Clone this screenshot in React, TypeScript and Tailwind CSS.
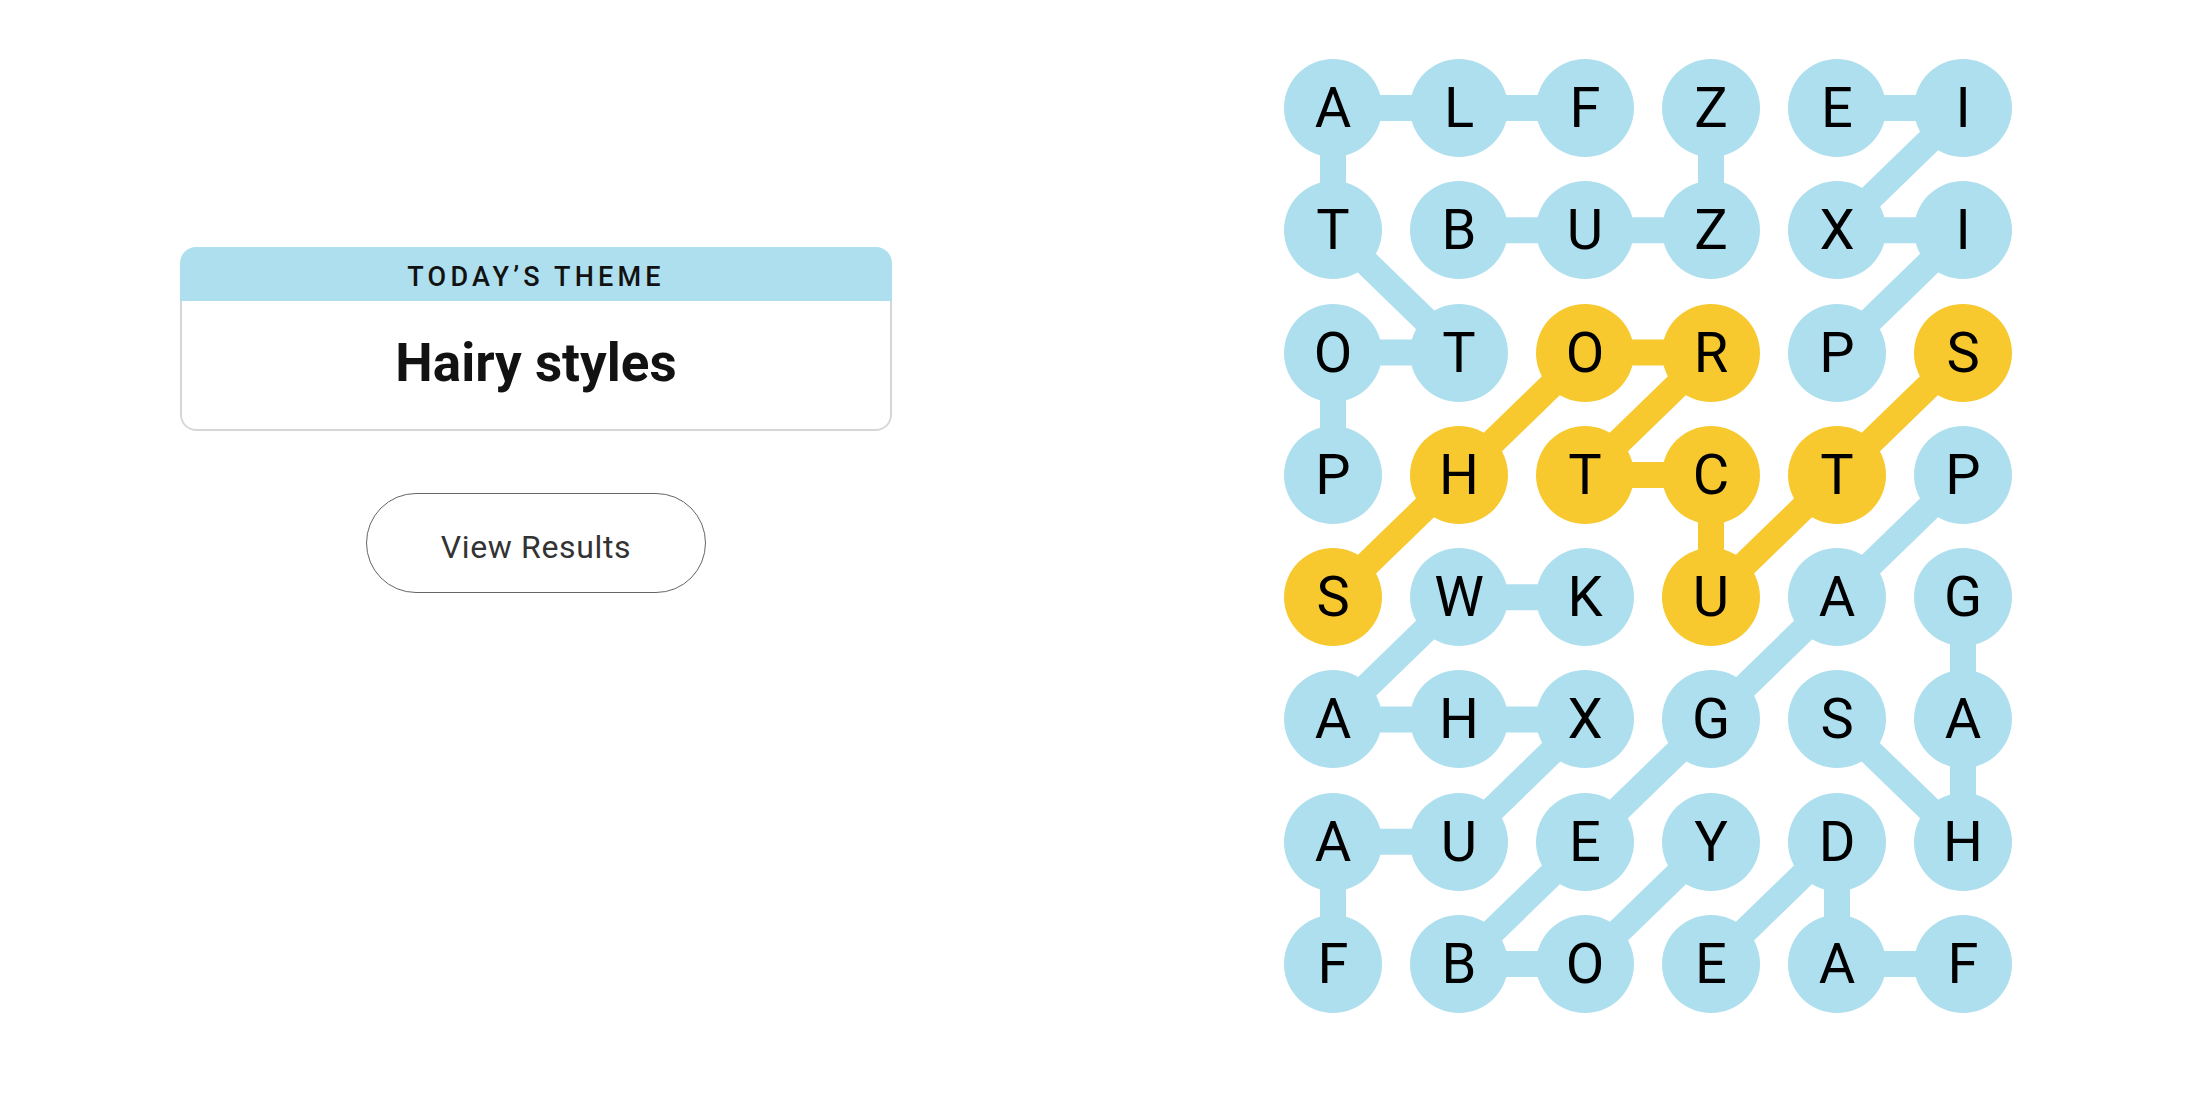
import React from "react"

// ============================================
// BOARD DATA
// ============================================

type Cell = [number, number] // [col, row]

const board: string[] = [
  "ALFZEI",
  "TBUZXI",
  "OTORPS",
  "PHTCTP",
  "SWKUAG",
  "AHXGSA",
  "AUEYDH",
  "FBOEAF",
]

const BLUE = "#aedfee"
const YELLOW = "#f7c92e"

const COL_STEP = 126
const ROW_STEP = 122.3
const SIZE = 98

// theme words, each as a path of cells
const themeWords: Cell[][] = [
  // FLATTOP
  [[2, 0], [1, 0], [0, 0], [0, 1], [1, 2], [0, 2], [0, 3]],
  // BUZZ
  [[1, 1], [2, 1], [3, 1], [3, 0]],
  // PIXIE
  [[4, 2], [5, 1], [4, 1], [5, 0], [4, 0]],
  // PAGEBOY
  [[5, 3], [4, 4], [3, 5], [2, 6], [1, 7], [2, 7], [3, 6]],
  // FAUXHAWK
  [[0, 7], [0, 6], [1, 6], [2, 5], [1, 5], [0, 5], [1, 4], [2, 4]],
  // SHAG
  [[4, 5], [5, 6], [5, 5], [5, 4]],
  // FADE
  [[5, 7], [4, 7], [4, 6], [3, 7]],
]

// spangram
const spangram: Cell[] = [[0, 4], [1, 3], [2, 2], [3, 2], [2, 3], [3, 3], [3, 4], [4, 3], [5, 2]]

const isSpangram = (c: number, r: number) => spangram.some(([sc, sr]) => sc === c && sr === r)

const center = ([c, r]: Cell) => ({ x: SIZE / 2 + c * COL_STEP, y: SIZE / 2 + r * ROW_STEP })

// ============================================
// CONNECTORS
// ============================================

function PathLines({ cells, color }: { cells: Cell[]; color: string }) {
  return (
    <>
      {cells.slice(1).map((cell, i) => {
        const a = center(cells[i])
        const b = center(cell)
        return <line key={i} x1={a.x} y1={a.y} x2={b.x} y2={b.y} stroke={color} strokeWidth={26} />
      })}
    </>
  )
}

// ============================================
// COMPONENT
// ============================================

export default function App() {
  const width = SIZE + 5 * COL_STEP
  const height = SIZE + 7 * ROW_STEP

  return (
    <div className="flex w-full h-[1100px] bg-white font-['Roboto',sans-serif] text-black">

      {/* Theme + results */}
      <div className="w-1/2 flex flex-col items-center pt-[247px] pr-[28px]">
        <div className="w-[712px] rounded-[16px] overflow-hidden">
          <div className="h-[54px] bg-[#aedfee] flex items-center justify-center pt-[6px]">
            <span className="text-[27px] font-medium tracking-[0.155em] text-[#121212] leading-none">
              TODAY’S THEME
            </span>
          </div>
          <div className="h-[130px] border-x-2 border-b-2 border-[#d6d6d6] rounded-b-[16px] flex items-center justify-center pb-[2px]">
            <h1 className="text-[53px] font-bold text-[#121212]">Hairy styles</h1>
          </div>
        </div>

        <button className="mt-[62px] w-[340px] h-[100px] rounded-full border-[1.5px] border-[#666] bg-white pt-[7px] text-[32px] text-[#333] tracking-[0.02em]">
          View Results
        </button>
      </div>

      {/* Board */}
      <div className="w-1/2 flex justify-center pt-[59px] pr-[4px]">
        <div className="relative">
          <svg className="absolute inset-0" width={width} height={height} viewBox={`0 0 ${width} ${height}`}>
            {themeWords.map((w, i) => (
              <PathLines key={i} cells={w} color={BLUE} />
            ))}
            <PathLines cells={spangram} color={YELLOW} />
          </svg>

          <div className="relative grid grid-cols-[repeat(6,98px)] auto-rows-[98px] gap-x-[28px] gap-y-[24.3px]">
            {board.map((row, r) =>
              row.split("").map((letter, c) => (
                <button
                  key={`${r}-${c}`}
                  className={`w-[98px] h-[98px] rounded-full flex items-center justify-center text-[56px] leading-none ${
                    isSpangram(c, r) ? "bg-[#f7c92e]" : "bg-[#aedfee]"
                  }`}
                >
                  {letter}
                </button>
              ))
            )}
          </div>
        </div>
      </div>

    </div>
  )
}
